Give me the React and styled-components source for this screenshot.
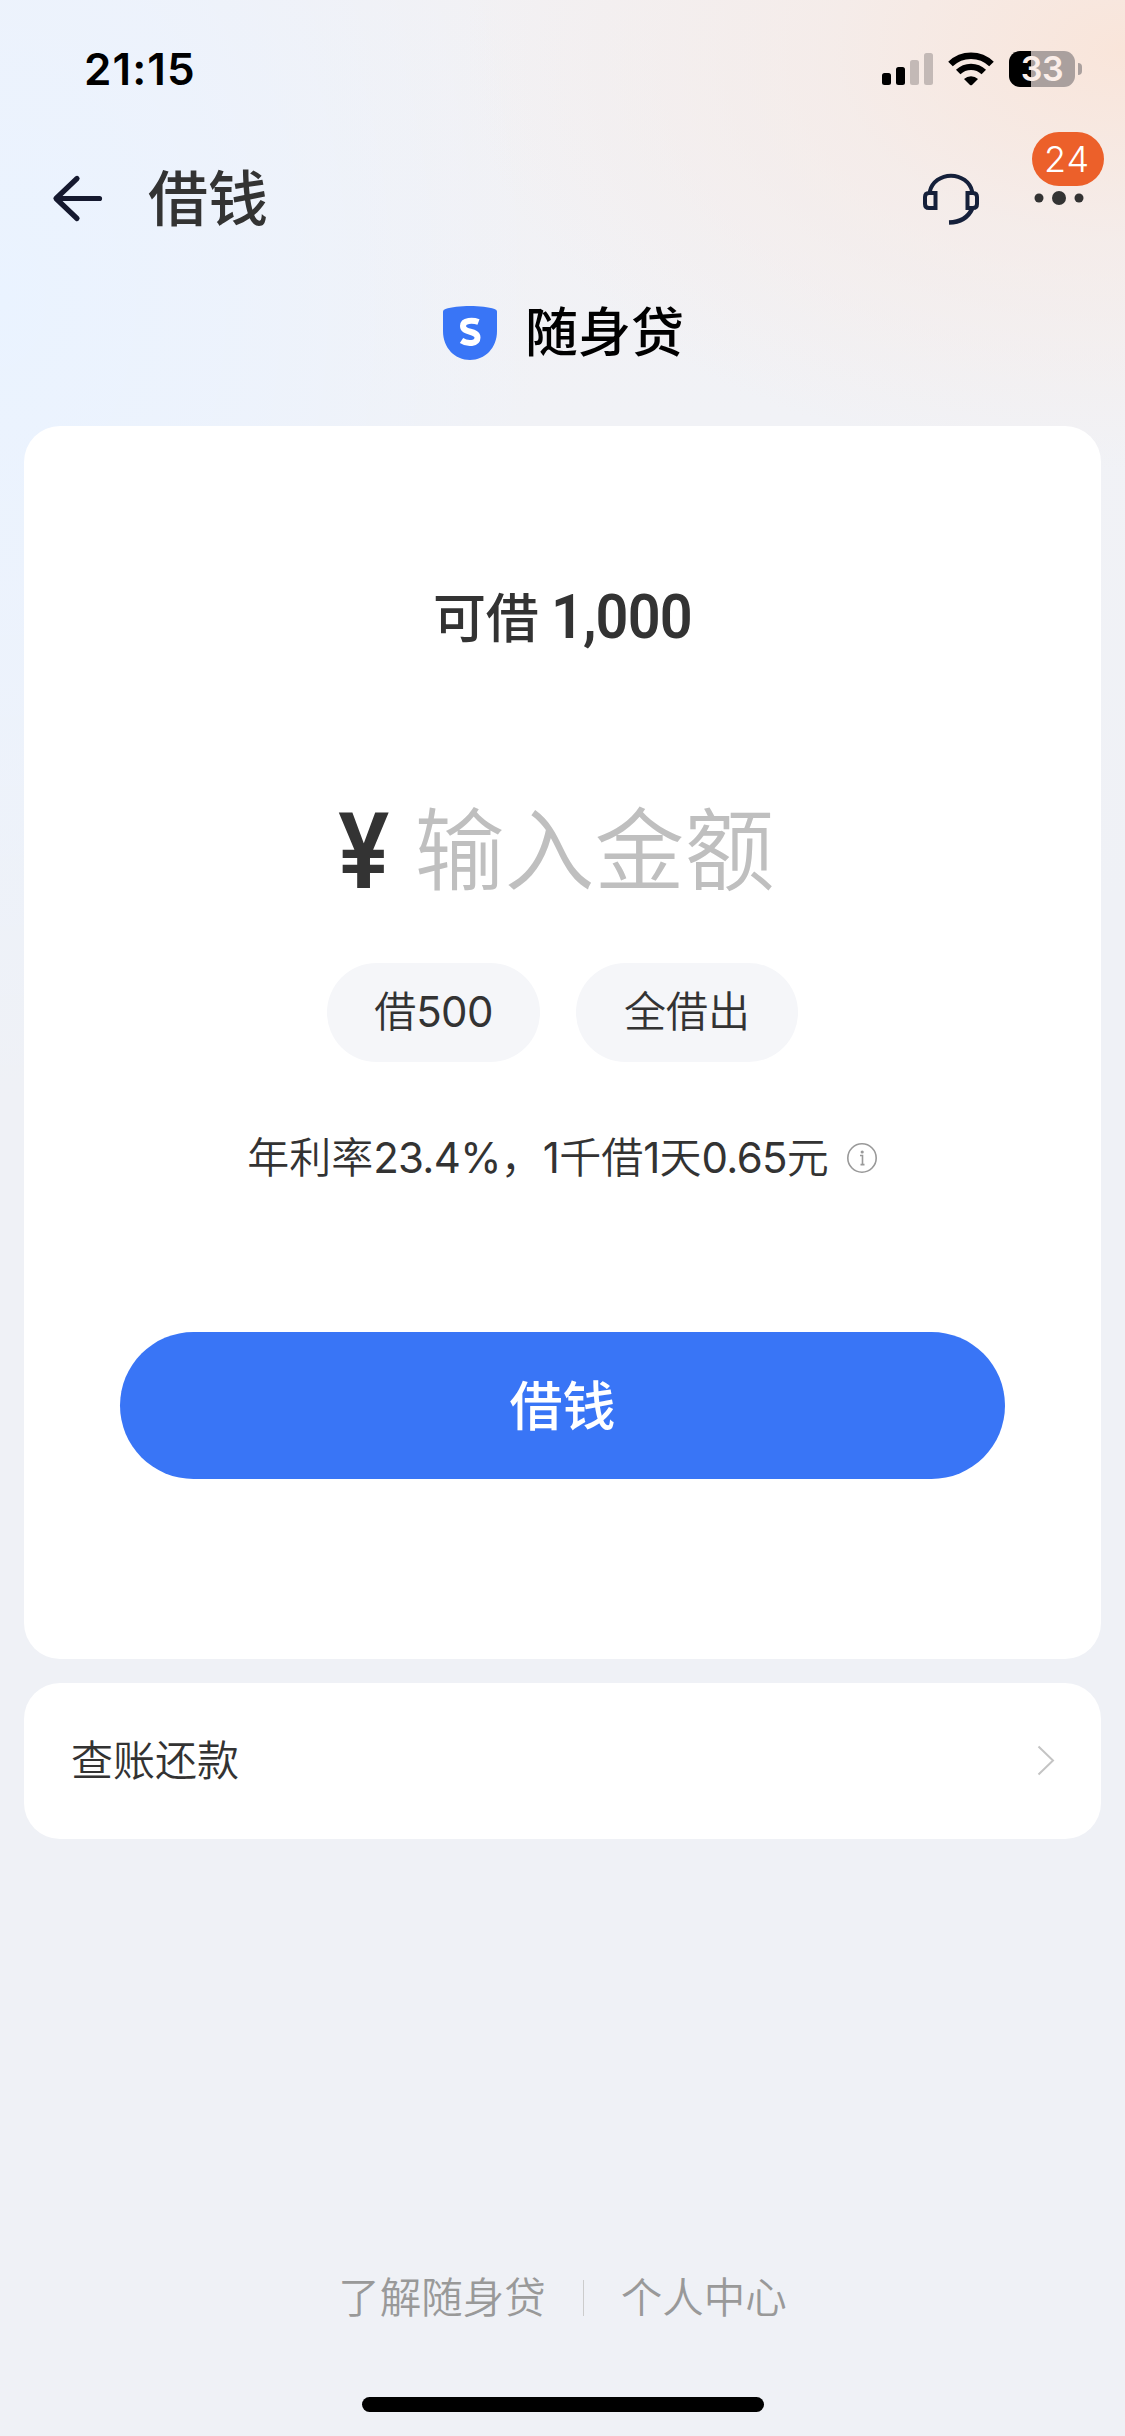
import React, { useState } from 'react';
import styled, { createGlobalStyle } from 'styled-components';

const GlobalStyle = createGlobalStyle`
    * {
        box-sizing: border-box;
    }
    body {
        margin: 0;
        font-family: Inter, 'Noto Sans CJK SC', sans-serif;
        color: #333;
    }
    button {
        font-family: inherit;
        border: none;
        padding: 0;
        cursor: pointer;
    }
`;

const Page = styled.div`
    width: 1125px;
    height: 2436px;
    display: flex;
    flex-direction: column;
    background:
        radial-gradient(ellipse 660px 420px at 1125px 50px, #f9e5da 0%, rgba(246, 234, 229, 0.7) 45%, rgba(243, 240, 242, 0) 100%),
        radial-gradient(ellipse 540px 800px at 0 300px, #eaf3ff 0%, rgba(235, 243, 255, 0.7) 45%, rgba(239, 241, 246, 0) 100%),
        linear-gradient(#f2f1f4 0, #f1f2f6 420px, #eff1f6 900px);
`;

const StatusBar = styled.div`
    height: 138px;
    padding: 0 43px 0 84px;
    display: flex;
    align-items: center;
    justify-content: space-between;
    color: #000;
`;

const Time = styled.span`
    font-size: 44px;
    font-weight: 600;
    line-height: 54px;
    letter-spacing: 1.1px;
`;

const StatusIcons = styled.div`
    display: flex;
    align-items: center;
`;

const Battery = styled.div`
    width: 66px;
    height: 36px;
    margin-left: 15px;
    border-radius: 11px;
    background: linear-gradient(to right, #000 22px, #aaa09e 22px);
    color: #fbeee9;
    font-size: 34px;
    font-weight: 600;
    line-height: 36px;
    text-align: center;
    letter-spacing: -0.5px;
`;

const BatteryTip = styled.div`
    width: 4px;
    height: 12px;
    margin-left: 3px;
    border-radius: 0 4px 4px 0;
    background: #aaa09e;
`;

const NavBar = styled.div`
    height: 120px;
    padding: 2px 41px 0 51px;
    display: flex;
    align-items: center;
`;

const NavTitle = styled.h1`
    flex: 1;
    margin: 0 0 0 41px;
    font-size: 60px;
    font-weight: 500;
    line-height: 80px;
`;

const MoreButton = styled.button`
    position: relative;
    width: 50px;
    height: 60px;
    margin-left: 54px;
    background: none;
`;

const Badge = styled.span`
    position: absolute;
    top: -37px;
    left: -2px;
    width: 72px;
    height: 54px;
    padding-right: 2px;
    border-radius: 27px;
    background: #ec602a;
    color: #fff;
    font-size: 36px;
    font-weight: 350;
    line-height: 54px;
    letter-spacing: 1px;
    text-align: center;
`;

const Brand = styled.div`
    height: 168px;
    padding: 35px 0 0 1px;
    display: flex;
    justify-content: center;
    gap: 28px;
    color: #000;
    font-size: 53px;
    font-weight: 500;
    line-height: 80px;

    svg {
        margin: 13px 0 0 1px;
    }
`;

const Card = styled.section`
    height: 1233px;
    margin: 0 24px;
    padding-top: 151px;
    border-radius: 36px;
    background: #fff;
    display: flex;
    flex-direction: column;
    align-items: center;
`;

const Quota = styled.div`
    display: flex;
    align-items: baseline;
    gap: 12px;
    height: 80px;
    font-size: 53px;
    font-weight: 500;
    line-height: 80px;
`;

// Roboto squeezed a little, to get closer to the DIN figures used for money
const QuotaValue = styled.span`
    margin-right: -10px;
    font-family: Roboto, sans-serif;
    font-size: 62px;
    font-weight: 600;
    letter-spacing: -1px;
    transform: scaleX(0.93);
    transform-origin: left;
`;

const Amount = styled.label`
    width: 450px;
    height: 120px;
    margin-top: 136px;
    display: flex;
    align-items: center;
`;

const Currency = styled.span`
    width: 77px;
    font-family: Roboto, sans-serif;
    font-size: 105px;
    font-weight: 600;
    line-height: 120px;
    transform: scaleX(0.91);
    transform-origin: 2px 50%;
`;

const AmountInput = styled.input`
    width: 372px;
    height: 120px;
    padding: 0 0 18px;
    border: none;
    outline: none;
    background: none;
    font-family: 'Noto Sans CJK SC', sans-serif;
    font-size: 90px;

    &::placeholder {
        color: #bfbfbf;
        font-weight: 350;
        opacity: 1;
    }
`;

const Chips = styled.div`
    display: flex;
    gap: 36px;
    margin-top: 50px;
`;

const Chip = styled.button`
    width: ${(props) => props.$width};
    height: 99px;
    padding-bottom: 2px;
    border-radius: 50px;
    background: #f5f6f9;
    color: #333;
    font-size: 42px;
    font-weight: 350;
    line-height: 97px;
`;

const Num = styled.span`
    font-weight: 400;
    letter-spacing: -0.7px;
`;

const Rate = styled.div`
    display: flex;
    align-items: center;
    gap: 17px;
    height: 60px;
    margin-top: 66px;
    font-size: 42px;
    font-weight: 350;
    line-height: 60px;
    white-space: nowrap;
`;

const SubmitButton = styled.button`
    width: 885px;
    height: 147px;
    margin-top: 144px;
    padding-bottom: 5px;
    border-radius: 74px;
    background: #3975f6;
    color: #fff;
    font-size: 53px;
    font-weight: 500;
`;

const LinkRow = styled.a`
    height: 156px;
    margin: 24px 24px 0;
    padding: 0 46px 0 47px;
    border-radius: 36px;
    background: #fff;
    display: flex;
    align-items: center;
    justify-content: space-between;
    font-size: 42px;
    font-weight: 350;
    line-height: 60px;
`;

const Footer = styled.footer`
    margin-top: auto;
    height: 168px;
    display: flex;
    flex-direction: column;
    align-items: center;
    justify-content: space-between;
`;

const FooterLinks = styled.nav`
    display: flex;
    align-items: center;
    gap: 37px;
    color: #999;
    font-size: 41.5px;
    font-weight: 350;
    line-height: 60px;
`;

const Divider = styled.i`
    width: 1px;
    height: 36px;
    background: #ccc;
`;

const HomeIndicator = styled.div`
    width: 402px;
    height: 15px;
    margin: 0 0 24px;
    border-radius: 8px;
    background: #000;
`;

const SignalIcon = () => (
    <svg width="51" height="32" viewBox="0 0 51 32">
        <rect x="0" y="20" width="9" height="12" rx="2.5" />
        <rect x="14" y="14" width="9" height="18" rx="2.5" />
        <rect x="28" y="7" width="9" height="25" rx="2.5" fill="#c3b9b6" />
        <rect x="42" y="0" width="9" height="32" rx="2.5" fill="#c3b9b6" />
    </svg>
);

const WifiSvg = styled.svg`
    margin-left: 15px;
`;

const WifiIcon = () => (
    <WifiSvg width="46" height="34" viewBox="0 0 46 34">
        <path d="M2.5 12 A29.5 29.5 0 0 1 43.5 12" fill="none" stroke="#000" strokeWidth="6.6" />
        <path d="M10.2 20 A18.5 18.5 0 0 1 35.8 20" fill="none" stroke="#000" strokeWidth="6.4" />
        <path d="M16 27 A10.5 10.5 0 0 1 30 27 L24 32.9 Q23 33.8 22 32.9 Z" />
    </WifiSvg>
);

const BackIcon = () => (
    <svg width="56" height="54" viewBox="0 0 56 54" fill="none" stroke="#15192f" strokeWidth="5.2" strokeLinecap="round" strokeLinejoin="round">
        <path d="M26 6.5 L5 26.5 L26 46.5 M6 26.5 H48.5" />
    </svg>
);

const HeadsetIcon = () => (
    <svg width="58" height="58" viewBox="0 0 58 58" fill="none" stroke="#15203a" strokeWidth="4">
        <path d="M8 23 V21 A21.5 19.5 0 0 1 50 21 V23" />
        <path d="M13.5 23 V38 H7 Q3 38 3 34 V27 Q3 23 7 23 Z" />
        <path d="M45.5 23 V38 H51 Q55 38 55 34 V27 Q55 23 51 23 Z" />
        <path d="M50 39 Q44 52 27 52.5" strokeWidth="4.4" />
    </svg>
);

const MoreIcon = () => (
    <svg width="50" height="16" viewBox="0 0 50 16" fill="#333">
        <circle cx="5" cy="8" r="4.5" />
        <circle cx="25" cy="8" r="7" />
        <circle cx="45" cy="8" r="4.5" />
    </svg>
);

const BrandIcon = () => (
    <svg width="54" height="54" viewBox="0 0 54 54">
        <path d="M0 5.5 Q0 3.8 2.5 3 C14 -1 40 -1 51.5 3 Q54 3.8 54 5.5 V25 C54 42 42 54 27 54 C12 54 0 42 0 25 Z" fill="#3975f6" />
        <path d="M35.5 16 C30 14 20 13.8 20 20 C20 27.5 34.5 24 34.5 31.5 C34.5 38 24.5 38.5 18.5 34.5" fill="none" stroke="#fff" strokeWidth="6" />
    </svg>
);

const InfoIcon = () => (
    <svg width="32" height="32" viewBox="0 0 32 32" fill="none" stroke="#999" strokeWidth="1.6">
        <circle cx="16" cy="16" r="14.2" />
        <path d="M14 13.5 H16.5 V22.5 M14.5 22.6 H18.5" />
        <circle cx="16.2" cy="10" r="0.8" fill="#999" />
    </svg>
);

const ChevronIcon = () => (
    <svg width="18" height="32" viewBox="0 0 18 32" fill="none" stroke="#c4c4c4" strokeWidth="2">
        <path d="M1.5 1.5 L16 15.5 L1.5 29.5" />
    </svg>
);

const App = () => {
    const [amount, setAmount] = useState('');

    return (
        <>
            <GlobalStyle />
            <Page>
                <StatusBar>
                    <Time>21:15</Time>
                    <StatusIcons>
                        <SignalIcon />
                        <WifiIcon />
                        <Battery>33</Battery>
                        <BatteryTip />
                    </StatusIcons>
                </StatusBar>
                <NavBar>
                    <BackIcon />
                    <NavTitle>借钱</NavTitle>
                    <HeadsetIcon />
                    <MoreButton>
                        <MoreIcon />
                        <Badge>24</Badge>
                    </MoreButton>
                </NavBar>
                <Brand>
                    <BrandIcon />
                    随身贷
                </Brand>
                <Card>
                    <Quota>
                        可借<QuotaValue>1,000</QuotaValue>
                    </Quota>
                    <Amount>
                        <Currency>¥</Currency>
                        <AmountInput
                            placeholder="输入金额"
                            value={amount}
                            onChange={(e) => setAmount(e.target.value)}
                        />
                    </Amount>
                    <Chips>
                        <Chip $width="213px" onClick={() => setAmount('500')}>借<Num>500</Num></Chip>
                        <Chip $width="222px" onClick={() => setAmount('1000')}>全借出</Chip>
                    </Chips>
                    <Rate>
                        <span>
                            年利率<Num>23.4%</Num>，<Num>1</Num>千借<Num>1</Num>天<Num>0.65</Num>元
                        </span>
                        <InfoIcon />
                    </Rate>
                    <SubmitButton>借钱</SubmitButton>
                </Card>
                <LinkRow>
                    <span>查账还款</span>
                    <ChevronIcon />
                </LinkRow>
                <Footer>
                    <FooterLinks>
                        <span>了解随身贷</span>
                        <Divider />
                        <span>个人中心</span>
                    </FooterLinks>
                    <HomeIndicator />
                </Footer>
            </Page>
        </>
    );
};

export default App;
